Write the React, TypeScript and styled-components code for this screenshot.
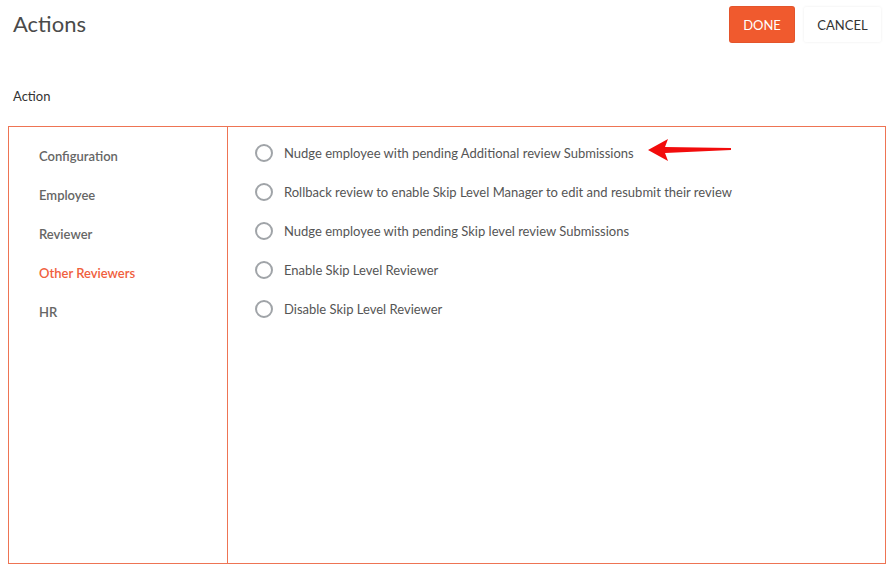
import React from 'react';
import styled, { createGlobalStyle } from 'styled-components';

const GlobalStyle = createGlobalStyle`
  body {
    margin: 0;
    background: #fff;
    font-family: Lato, "Open Sans", sans-serif;
  }
`;

const Page = styled.div`
  width: 894px;
  height: 579px;
  box-sizing: border-box;
  padding: 0 8px;
  display: flex;
  flex-direction: column;
`;

const Header = styled.div`
  display: flex;
  align-items: center;
  justify-content: space-between;
  height: 49px;
  padding: 0 5px 0 5px;
`;

const Title = styled.h1`
  margin: 0;
  font-size: 22px;
  font-weight: 400;
  color: #4a4a4a;
  line-height: 1;
  margin-top: -2px;
`;

const Buttons = styled.div`
  display: flex;
  gap: 10px;
`;

const Button = styled.button<{ $primary?: boolean }>`
  height: 35px;
  padding: 0 13px;
  border: none;
  border-radius: 2px;
  font-family: Lato, sans-serif;
  font-size: 13px;
  text-transform: uppercase;
  cursor: pointer;
  background: ${(p) => (p.$primary ? '#f05a2e' : '#fff')};
  color: ${(p) => (p.$primary ? '#fff' : '#333')};
  box-shadow: ${(p) =>
    p.$primary ? '0 0 0 1px #e4542b' : '0 0 3px rgba(0,0,0,0.08)'};
  min-width: ${(p) => (p.$primary ? '64px' : '77px')};
`;

const SectionLabel = styled.div`
  padding: 0 5px;
  margin-top: 39px;
  font-size: 13px;
  color: #333;
  line-height: 16px;
`;

const Panel = styled.div`
  margin-top: 22px;
  height: 438px;
  box-sizing: border-box;
  border: 1px solid #ee7454;
  display: flex;
`;

const Sidebar = styled.ul`
  list-style: none;
  margin: 0;
  padding: 10px 0 0 30px;
  width: 188px;
  border-right: 1px solid #ee7454;
`;

const NavItem = styled.li<{ $active?: boolean }>`
  height: 39px;
  line-height: 39px;
  font-size: 13px;
  font-weight: 600;
  color: ${(p) => (p.$active ? '#f0603d' : '#666')};
  cursor: pointer;
`;

const Options = styled.div`
  flex: 1;
  padding: 6px 0 0 27px;
  display: flex;
  flex-direction: column;
`;

const Option = styled.label`
  display: flex;
  align-items: center;
  height: 39px;
  font-size: 13px;
  color: #555;
  cursor: pointer;
`;

const Radio = styled.span`
  width: 18px;
  height: 18px;
  box-sizing: border-box;
  border: 2px solid #a0a4a8;
  border-radius: 50%;
  margin-right: 11px;
  flex-shrink: 0;
`;

const Arrow = styled.svg`
  margin-left: 12px;
  margin-top: -6px;
  flex-shrink: 0;
`;

const navItems = ['Configuration', 'Employee', 'Reviewer', 'Other Reviewers', 'HR'];

const actions = [
  'Nudge employee with pending Additional review Submissions',
  'Rollback review to enable Skip Level Manager to edit and resubmit their review',
  'Nudge employee with pending Skip level review Submissions',
  'Enable Skip Level Reviewer',
  'Disable Skip Level Reviewer',
];

const App: React.FC = () => {
  return (
    <>
      <GlobalStyle />
      <Page>
        <Header>
          <Title>Actions</Title>
          <Buttons>
            <Button $primary>Done</Button>
            <Button>Cancel</Button>
          </Buttons>
        </Header>
        <SectionLabel>Action</SectionLabel>
        <Panel>
          <Sidebar>
            {navItems.map((item) => (
              <NavItem key={item} $active={item === 'Other Reviewers'}>
                {item}
              </NavItem>
            ))}
          </Sidebar>
          <Options>
            {actions.map((action, i) => (
              <Option key={action}>
                <Radio />
                {action}
                {i === 0 && (
                  <Arrow width="86" height="24" viewBox="0 0 86 24">
                    <polygon
                      points="2,12 22,1 19,9 85,10 85,12 19,15 22,23"
                      fill="#f20c0c"
                    />
                  </Arrow>
                )}
              </Option>
            ))}
          </Options>
        </Panel>
      </Page>
    </>
  );
};

export default App;
